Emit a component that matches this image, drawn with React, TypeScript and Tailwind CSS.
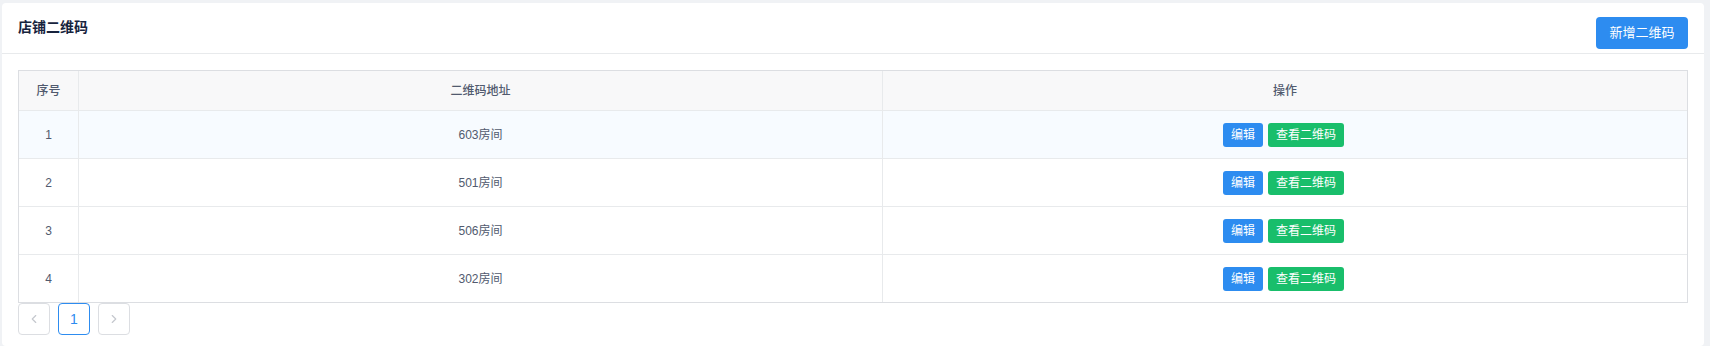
import React from 'react';
import { ChevronLeft, ChevronRight } from 'lucide-react';

const rows = [
  { id: 1, name: '603房间' },
  { id: 2, name: '501房间' },
  { id: 3, name: '506房间' },
  { id: 4, name: '302房间' },
];

const font = { fontFamily: '"Liberation Sans", "Noto Sans CJK SC", sans-serif' };

const App: React.FC = () => {
  return (
    <div className="h-[346px] bg-[#f0f2f5] pt-[3px] pl-[2px] pr-[6px] text-[#515a6e]" style={font}>
      <div className="h-full bg-white rounded-[4px]">
        {/* 头部 */}
        <div className="h-[51px] border-b border-[#e8eaec] px-4 pt-[14px] flex items-start justify-between">
          <h2 className="text-[14px] leading-[20px] font-bold text-[#17233d]">店铺二维码</h2>
          <button className="w-[92px] h-[32px] rounded-[4px] bg-[#2d8cf0] text-white text-[13px]">
            新增二维码
          </button>
        </div>

        <div className="px-4 pt-4">
          <div className="border border-[#dcdee2] border-b-0 text-[12px]">
            <div className="grid grid-cols-[60px_1fr_1fr] h-[40px] bg-[#f8f8f9] border-b border-[#e8eaec] font-medium">
              <div className="flex items-center justify-center border-r border-[#e8eaec]">序号</div>
              <div className="flex items-center justify-center border-r border-[#e8eaec]">二维码地址</div>
              <div className="flex items-center justify-center">操作</div>
            </div>
            {rows.map((row, i) => (
              <div
                key={row.id}
                className={`grid grid-cols-[60px_1fr_1fr] h-[48px] border-b ${
                  i === rows.length - 1 ? 'border-[#dcdee2]' : 'border-[#e8eaec]'
                } ${i === 0 ? 'bg-[#f7fbff]' : 'bg-white'}`}
              >
                <div className="flex items-center justify-center border-r border-[#e8eaec]">{row.id}</div>
                <div className="flex items-center justify-center border-r border-[#e8eaec]">{row.name}</div>
                <div className="flex items-center justify-center gap-[5px] pr-[3px]">
                  <button className="w-[40px] h-[24px] rounded-[3px] bg-[#2d8cf0] text-white text-[12px]">编辑</button>
                  <button className="w-[76px] h-[24px] rounded-[3px] bg-[#19be6b] text-white text-[12px]">查看二维码</button>
                </div>
              </div>
            ))}
          </div>

          {/* 分页 */}
          <div className="flex gap-2">
            <button className="w-8 h-8 rounded-[4px] border border-[#dcdee2] flex items-center justify-center text-[#c5c8ce]">
              <ChevronLeft size={14} strokeWidth={2} />
            </button>
            <button className="w-8 h-8 rounded-[4px] border border-[#2d8cf0] flex items-center justify-center text-[#2d8cf0] text-[14px]">
              1
            </button>
            <button className="w-8 h-8 rounded-[4px] border border-[#dcdee2] flex items-center justify-center text-[#c5c8ce]">
              <ChevronRight size={14} strokeWidth={2} />
            </button>
          </div>
        </div>
      </div>
    </div>
  );
};

export default App;
